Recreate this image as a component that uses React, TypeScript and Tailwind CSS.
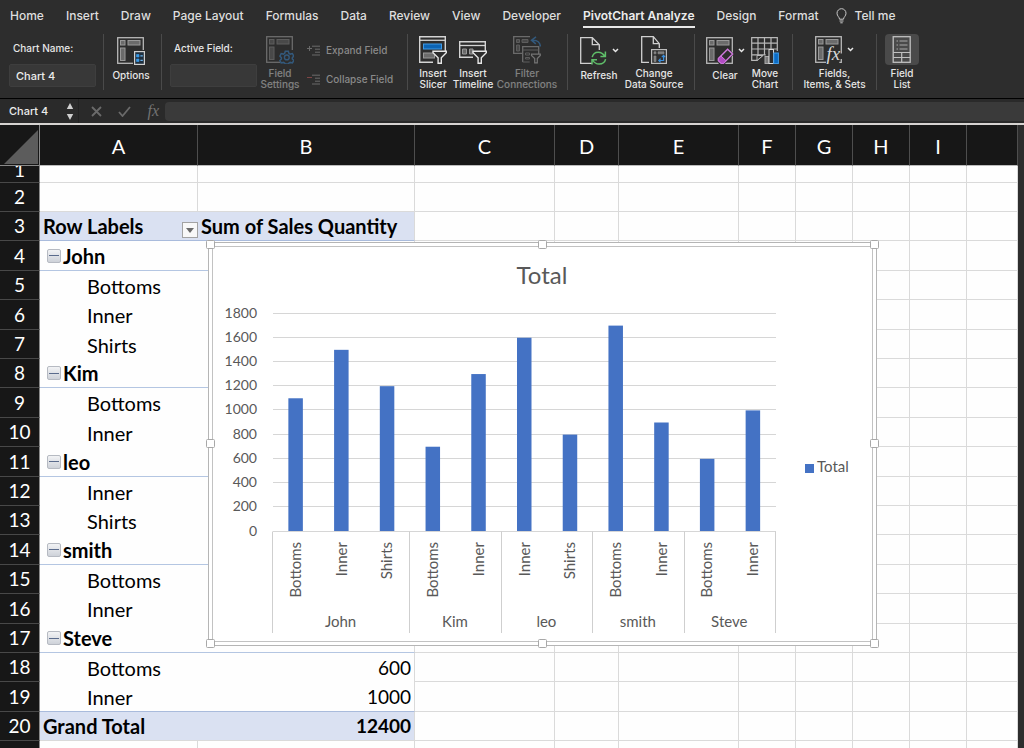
import { useState } from "react";
import type { ReactNode } from "react";

interface PivotRow {
  row: number;
  kind: "blank" | "header" | "group" | "item" | "total";
  label?: string;
  value?: string;
}

interface ChartGroup {
  name: string;
  items: { label: string; value: number }[];
}

const TABS = [
  "Home",
  "Insert",
  "Draw",
  "Page Layout",
  "Formulas",
  "Data",
  "Review",
  "View",
  "Developer",
  "PivotChart Analyze",
  "Design",
  "Format",
];

const COLUMNS = [
  { name: "A", width: "w-[158px]" },
  { name: "B", width: "w-[217px]" },
  { name: "C", width: "w-[140px]" },
  { name: "D", width: "w-[64px]" },
  { name: "E", width: "w-[120px]" },
  { name: "F", width: "w-[57px]" },
  { name: "G", width: "w-[57px]" },
  { name: "H", width: "w-[57px]" },
  { name: "I", width: "w-[57px]" },
  { name: "", width: "w-auto" },
];

const GROUPS: ChartGroup[] = [
  {
    name: "John",
    items: [
      { label: "Bottoms", value: 1100 },
      { label: "Inner", value: 1500 },
      { label: "Shirts", value: 1200 },
    ],
  },
  {
    name: "Kim",
    items: [
      { label: "Bottoms", value: 700 },
      { label: "Inner", value: 1300 },
    ],
  },
  {
    name: "leo",
    items: [
      { label: "Inner", value: 1600 },
      { label: "Shirts", value: 800 },
    ],
  },
  {
    name: "smith",
    items: [
      { label: "Bottoms", value: 1700 },
      { label: "Inner", value: 900 },
    ],
  },
  {
    name: "Steve",
    items: [
      { label: "Bottoms", value: 600 },
      { label: "Inner", value: 1000 },
    ],
  },
];

const buildRows = () => {
  const rows: PivotRow[] = [
    { row: 1, kind: "blank" },
    { row: 2, kind: "blank" },
    { row: 3, kind: "header", label: "Row Labels", value: "Sum of Sales Quantity" },
  ];
  let total = 0;
  GROUPS.forEach((group) => {
    rows.push({ row: rows.length + 1, kind: "group", label: group.name });
    group.items.forEach((item) => {
      total += item.value;
      rows.push({ row: rows.length + 1, kind: "item", label: item.label, value: String(item.value) });
    });
  });
  rows.push({ row: rows.length + 1, kind: "total", label: "Grand Total", value: String(total) });
  rows.push({ row: rows.length + 1, kind: "blank" });
  return rows;
};

const ROWS = buildRows();

const rowHeight = (row: number) => {
  if (row === 1) return "h-[17px]";
  if (row > 3 && (row % 5 === 4 || row % 5 === 1)) return "h-[30px]";
  return "h-[29px]";
};

/* ---------- ribbon icons ---------- */

function PivotIcon({ children }: { children?: ReactNode }) {
  return (
    <svg width="28" height="28" viewBox="0 0 28 28" fill="none">
      <rect x="0.7" y="0.7" width="25.6" height="25.6" stroke="#b8b8b8" strokeWidth="1.3" />
      <rect x="3.5" y="3.5" width="4.5" height="4.5" fill="#6b6b6b" stroke="#999" />
      <rect x="11" y="3.5" width="12" height="4.5" fill="#6b6b6b" stroke="#999" />
      <rect x="3.5" y="11" width="4.5" height="12.5" fill="#6b6b6b" stroke="#999" />
      {children}
    </svg>
  );
}

const optionsIcon = (
  <PivotIcon>
    <rect x="16" y="13" width="12" height="15" fill="#2d2d2d" />
    <rect x="17.6" y="14.6" width="9.8" height="12.8" fill="#20303f" stroke="#d0d0d0" strokeWidth="1.2" />
    <path d="M19.5 17.5h2.5v2.5h-2.5zM19.5 22h2.5v2.5h-2.5z" fill="#3a9be8" stroke="#3a9be8" strokeWidth="0.6" />
    <path d="M23.4 18.8h2.4M23.4 23.3h2.4" stroke="#6cb6f0" strokeWidth="1.2" />
  </PivotIcon>
);

const fieldSettingsIcon = (
  <PivotIcon>
    <rect x="14" y="14" width="14" height="14" fill="#2d2d2d" />
    <path
      d="M19.3 15.2h3l.6 2.1 1.3.8 2.2-.5 1.4 2.5-1.5 1.6v1.2l1.5 1.6-1.4 2.4-2.2-.5-1.3.8-.6 0.7h-3l-.6-0.7-1.3-.8-2.2.5-1.3-2.4 1.5-1.6v-1.2l-1.5-1.6 1.3-2.5 2.2.5 1.3-.8z"
      stroke="#3b8fdd"
      strokeWidth="1.5"
    />
    <circle cx="20.8" cy="21.4" r="2.4" stroke="#3b8fdd" strokeWidth="1.4" />
  </PivotIcon>
);

const slicerIcon = (
  <svg width="28" height="28" viewBox="0 0 28 28" fill="none">
    <path d="M26.3 15V0.7H0.7v25.6H14" stroke="#d4d4d4" strokeWidth="1.4" />
    <path d="M0.7 4.3h25.6" stroke="#d4d4d4" strokeWidth="1.3" />
    <rect x="4.5" y="8" width="18" height="5" fill="#0c64b4" stroke="#3f9ae6" />
    <rect x="4.5" y="17" width="11" height="5" fill="#6b6b6b" stroke="#999" />
    <path d="M14 15.2h13.3v1.6l-5 5v5.5h-3.2v-5.5l-5.1-5z" fill="#2d2d2d" stroke="#e6e6e6" strokeWidth="1.4" />
  </svg>
);

const timelineIcon = (
  <svg width="28" height="28" viewBox="0 0 28 28" fill="none">
    <path d="M26.3 15V5.7H0.7v15.6H14" stroke="#d4d4d4" strokeWidth="1.4" />
    <path d="M0.7 9.5h25.6" stroke="#d4d4d4" strokeWidth="1.3" />
    <path d="M3.5 13h4v5h-4zM10.5 13h3.5v5h-3.5z" fill="#6b6b6b" stroke="#999" />
    <path d="M14 15.2h13.3v1.6l-5 5v5.5h-3.2v-5.5l-5.1-5z" fill="#2d2d2d" stroke="#e6e6e6" strokeWidth="1.4" />
  </svg>
);

const connectionsIcon = (
  <svg width="28" height="28" viewBox="0 0 28 28" fill="none">
    <path d="M17 0.7H0.7v16.6H9" stroke="#b8b8b8" strokeWidth="1.3" />
    <path d="M3.5 3.5h3v3h-3zM9 3.5h6v3H9zM3.5 9h3v6h-3z" fill="#6b6b6b" stroke="#999" />
    <path d="M9.7 26V10.7h16V18" stroke="#b8b8b8" strokeWidth="1.3" />
    <path d="M9.7 14h16M9.7 26h7M12.5 17h4v2h-4zM12.5 21.5h4v1.5h-4z" stroke="#999" />
    <path d="M18.5 18.2h8.8v1.2l-3 3.2v4.2h-2.6v-4.2l-3.2-3.2z" fill="#2d2d2d" stroke="#ccc" strokeWidth="1.2" />
    <path d="M27.3 10.5c0-4-3-6.6-7.8-6.3M23 0.8l-4.5 3.4 4.3 3.7" stroke="#3b8fdd" strokeWidth="1.5" />
  </svg>
);

const refreshIcon = (
  <svg width="28" height="28" viewBox="0 0 28 28" fill="none">
    <path d="M12 26.3H0.7V0.7h11.6l7 7V13M12.3 0.7v7h7" stroke="#d0d0d0" strokeWidth="1.3" />
    <path d="M12.2 20.2c.8-3.4 3.3-5 6-5 3 0 5.2 1.7 6.6 4.2M25.4 14.6v5h-5" stroke="#5fbf6a" strokeWidth="1.5" />
    <path d="M25.6 22.2c-.8 3.4-3.3 4.9-6.4 4.9-3 0-5.2-1.6-6.6-4.1M12 27.6v-4.8h5" stroke="#5fbf6a" strokeWidth="1.5" />
  </svg>
);

const dataSourceIcon = (
  <svg width="28" height="28" viewBox="0 0 28 28" fill="none">
    <path d="M9 26.3H1.7V0.7h11.6l6 7V12M13.3 0.7v7h6" stroke="#d0d0d0" strokeWidth="1.3" />
    <rect x="11.6" y="13.6" width="14.8" height="13.8" fill="#303030" stroke="#bdbdbd" strokeWidth="1.2" />
    <path d="M14 15.8h2v2h-2zM18 15.8h6v2h-6zM14 20h2v5.500h-2z" fill="#7d7d7d" stroke="#8f8f8f" strokeWidth="0.6" />
    <path d="M23.6 19.5v5h-4.6M20.6 22.6l-1.8 1.9 1.8 1.8M21.8 21.2l1.8-1.8 1.6 1.8" stroke="#3b8fdd" strokeWidth="1.2" />
  </svg>
);

const clearIcon = (
  <PivotIcon>
    <path d="M11 20.5 21 10.5l7 6.5L18 28h-5z" fill="#2d2d2d" />
    <path d="M12.4 21.6 21.6 12.2l5 4.7-9.2 9.5h-2.2l-2.8-2.7z" fill="#2d2d2d" stroke="#d07ade" strokeWidth="1.4" />
    <path d="m12.4 21.6 2.6-2.6 5 4.7-2.6 2.7h-2.2l-2.8-2.7z" fill="#b24cc4" stroke="#d07ade" />
  </PivotIcon>
);

const moveChartIcon = (
  <svg width="28" height="28" viewBox="0 0 28 28" fill="none">
    <path d="M26.3 15V1.7H0.7v22.6H6l5-4.6M0.7 7.2h25.6M0.7 13h25.6M0.7 18.8h14M7 1.7v20M13.5 1.7v17M20 1.7v12" stroke="#b8b8b8" strokeWidth="1.2" />
    <path d="M6 24.5v-5h6z" fill="#2d2d2d" stroke="#b8b8b8" />
    <rect x="14" y="20.5" width="4" height="7" fill="#7a7a7a" stroke="#aaa" />
    <rect x="18" y="13.5" width="4.5" height="14" fill="#2d2d2d" stroke="#d8d8d8" />
    <rect x="22.8" y="17" width="4.6" height="10.5" fill="#0c6cc4" stroke="#3f9ae6" />
  </svg>
);

const fieldsIcon = (
  <PivotIcon>
    <path d="M11 12h17v16H11z" fill="#2d2d2d" />
    <path d="M26.3 12v5.5M26.3 23v3.3h-2" stroke="#b8b8b8" strokeWidth="1.3" />
    <text x="11.5" y="24" fill="#d8d8d8" fontSize="19" fontStyle="italic" fontFamily="Liberation Serif, serif">
      fx
    </text>
  </PivotIcon>
);

const fieldListIcon = (
  <svg width="28" height="28" viewBox="0 0 28 28" fill="none">
    <rect x="5.2" y="0.7" width="17" height="25.6" stroke="#c0c0c0" strokeWidth="1.3" />
    <path d="M8.5 5h1.5M11.5 5h8M8.5 9h1.5M11.5 9h8M8.5 13h1.5M11.5 13h8" stroke="#a8a8a8" strokeWidth="1.2" />
    <path d="M5.2 16.5h17M5.2 21.5h17M13.7 16.5v9.8" stroke="#c0c0c0" strokeWidth="1.2" />
  </svg>
);

function Chevron() {
  return (
    <svg width="7" height="5" viewBox="0 0 7 5" fill="none">
      <path d="M1 1l2.5 2.5L6 1" stroke="#e8e8e8" strokeWidth="1.5" />
    </svg>
  );
}

/* ---------- ribbon ---------- */

interface RibbonButtonProps {
  icon: ReactNode;
  lines: string[];
  width: string;
  menu?: boolean;
  disabled?: boolean;
  active?: boolean;
}

function RibbonButton({ icon, lines, width, menu, disabled, active }: RibbonButtonProps) {
  return (
    <button
      type="button"
      disabled={disabled}
      className={`flex shrink-0 flex-col items-center text-[10px] leading-[11px] font-medium text-[#e6e6e6] disabled:opacity-45 ${width}`}
    >
      <span
        className={`flex h-[33px] items-center justify-center gap-1 rounded-sm px-[3px] ${active ? "bg-[#4a4a4a]" : ""}`}
      >
        {icon}
        {menu && <Chevron />}
      </span>
      <span className="mt-[3px] whitespace-nowrap">
        {lines.map((line) => (
          <span key={line} className="block">
            {line}
          </span>
        ))}
      </span>
    </button>
  );
}

function FieldCommand({ label, sign }: { label: string; sign: string }) {
  return (
    <button
      type="button"
      disabled
      className="flex items-center gap-[5px] text-[10px] leading-[12px] font-medium whitespace-nowrap text-[#8a8a8a]"
    >
      <svg width="14" height="11" viewBox="0 0 14 11" fill="none">
        <path d="M5 1.2h8M8 4.2h5M8 7.2h5M5 10h8" stroke="#6b6b6b" />
        <path
          d={sign === "+" ? "M0 3.5h5M2.5 1v5" : "M0 3.5h5"}
          stroke={sign === "+" ? "#6b6b6b" : "#7d4545"}
        />
      </svg>
      {label}
    </button>
  );
}

function Ribbon({ chartName, onRename }: { chartName: string; onRename: (name: string) => void }) {
  const [activeTab, setActiveTab] = useState("PivotChart Analyze");

  return (
    <header className="shrink-0 border-b border-black bg-[#2d2d2d]">
      <nav className="flex h-8 items-center gap-[22px] px-[10px] text-xs font-medium whitespace-nowrap text-[#dedede]">
        {TABS.map((tab) => (
          <button
            key={tab}
            type="button"
            onClick={() => setActiveTab(tab)}
            className={
              tab === activeTab
                ? "mt-1 border-b-2 border-[#e8e8e8] pb-[2px] font-semibold text-[#ececec]"
                : ""
            }
          >
            {tab}
          </button>
        ))}
        <button type="button" className="-ml-[5px] flex items-center gap-2">
          <svg width="11" height="16" viewBox="0 0 11 16" fill="none" stroke="#c8c8c8">
            <path d="M3.5 11.2C3.5 9 1 8.2 1 5.2a4.5 4.5 0 0 1 9 0c0 3-2.5 3.8-2.5 6zM3.5 13h4M4.3 14.8h2.4" />
          </svg>
          Tell me
        </button>
      </nav>

      <div className="flex h-[66px] items-start pt-[2px]">
        <div className="flex h-14 w-[104px] shrink-0 flex-col border-r border-[#4a4a4a] pt-2 pl-[9px]">
          <label htmlFor="chart-name" className="pl-1 text-[10px] leading-[12px] font-medium text-[#e6e6e6]">
            Chart Name:
          </label>
          <input
            id="chart-name"
            value={chartName}
            onChange={(e) => onRename(e.target.value)}
            className="mt-[10px] h-[23px] w-[87px] rounded-xs border border-[#3e3e3e] bg-[#383838] px-[6px] text-[11px] font-medium text-[#ececec]"
          />
        </div>

        <div className="flex h-14 w-[58px] shrink-0 border-r border-[#4a4a4a] pl-[3px]">
          <RibbonButton icon={optionsIcon} lines={["Options"]} width="w-12" />
        </div>

        <div className="flex h-14 w-[246px] shrink-0 border-r border-[#4a4a4a] pl-2">
          <div className="flex flex-col pt-2">
            <label htmlFor="active-field" className="pl-1 text-[10px] leading-[12px] font-medium text-[#e6e6e6]">
              Active Field:
            </label>
            <input
              id="active-field"
              className="mt-[10px] h-[23px] w-[87px] rounded-xs border border-[#3e3e3e] bg-[#383838] px-[6px] text-[11px] text-[#ececec]"
            />
          </div>
          <RibbonButton icon={fieldSettingsIcon} lines={["Field", "Settings"]} width="w-[46px]" disabled />
          <div className="flex flex-col gap-[17px] pt-[10px] pl-1">
            <FieldCommand label="Expand Field" sign="+" />
            <FieldCommand label="Collapse Field" sign="-" />
          </div>
        </div>

        <div className="flex h-14 w-[160px] shrink-0 border-r border-[#4a4a4a] pl-[5px]">
          <RibbonButton icon={slicerIcon} lines={["Insert", "Slicer"]} width="w-10" />
          <RibbonButton icon={timelineIcon} lines={["Insert", "Timeline"]} width="w-10" />
          <RibbonButton icon={connectionsIcon} lines={["Filter", "Connections"]} width="w-[68px]" disabled />
        </div>

        <div className="flex h-14 w-[127px] shrink-0 border-r border-[#4a4a4a] pl-[7px]">
          <RibbonButton icon={refreshIcon} lines={["Refresh"]} width="w-12" menu />
          <RibbonButton icon={dataSourceIcon} lines={["Change", "Data Source"]} width="w-[62px]" />
        </div>

        <div className="flex h-14 w-[98px] shrink-0 border-r border-[#4a4a4a] pl-[6px]">
          <RibbonButton icon={clearIcon} lines={["Clear"]} width="w-12" menu />
          <RibbonButton icon={moveChartIcon} lines={["Move", "Chart"]} width="w-8" />
        </div>

        <div className="flex h-14 w-[84px] shrink-0 justify-center border-r border-[#4a4a4a]">
          <RibbonButton icon={fieldsIcon} lines={["Fields,", "Items, & Sets"]} width="w-[68px]" menu />
        </div>

        <div className="flex h-14 shrink-0 pl-[5px]">
          <RibbonButton icon={fieldListIcon} lines={["Field", "List"]} width="w-10" active />
        </div>
      </div>
    </header>
  );
}

function FormulaBar({ chartName }: { chartName: string }) {
  return (
    <div className="flex h-[26px] shrink-0 items-center border-b-2 border-[#d6d3d1] bg-[#2a2a2a]">
      <input
        aria-label="Name box"
        value={chartName}
        readOnly
        className="h-full w-[66px] bg-transparent pl-[9px] text-[11px] font-medium text-[#ececec]"
      />
      <button type="button" aria-label="Name list" className="flex h-full w-[13px] items-center border-r border-[#222]">
        <svg width="8" height="17" viewBox="0 0 8 17" fill="#cfcfcf">
          <path d="M4 0l3.2 6H.8zM4 17l3.2-6H.8z" />
        </svg>
      </button>
      <div className="flex w-[86px] items-center justify-between pr-[6px] pl-3">
        <button type="button" aria-label="Cancel" disabled>
          <svg width="11" height="11" viewBox="0 0 11 11" stroke="#6a6a6a" strokeWidth="1.8">
            <path d="M1 1l9 9M10 1l-9 9" />
          </svg>
        </button>
        <button type="button" aria-label="Enter" disabled>
          <svg width="13" height="11" viewBox="0 0 13 11" fill="none" stroke="#6a6a6a" strokeWidth="1.8">
            <path d="M1 6l3.5 4L12 1" />
          </svg>
        </button>
        <button type="button" className="font-['Liberation_Serif',serif] text-base leading-4 text-[#737373] italic" disabled>
          fx
        </button>
      </div>
      <input aria-label="Formula" className="h-[19px] min-w-0 flex-1 rounded-l-sm bg-[#3a3a3a] px-2 text-xs text-white" />
    </div>
  );
}

/* ---------- sheet ---------- */

const cellBorder = (kind: PivotRow["kind"], nextKind?: PivotRow["kind"]) => {
  if (kind === "header" || nextKind === "total") return "border-b border-[#a9bbdc]";
  if (kind === "group") return "border-b border-[#b4c6e2]";
  if (kind === "item") return "";
  return "border-b border-[#dadada]";
};

function SheetRow({ data, nextKind }: { data: PivotRow; nextKind?: PivotRow["kind"] }) {
  const { row, kind, label, value } = data;
  const bold = kind === "item" || kind === "blank" ? "" : "font-bold";
  const shaded = kind === "header" || kind === "total" ? "bg-[#dae1f2]" : "";
  const border = cellBorder(kind, nextKind);

  return (
    <tr className={rowHeight(row)}>
      <th scope="row" className="border-r border-b border-r-[#8a8a8a] border-b-[#484848] bg-[#171717] p-0 text-[19px] font-normal text-white">
        {/* row 1 is scrolled half under the column headers */}
        <div className={row === 1 ? "flex h-4 items-end justify-center overflow-hidden leading-6" : "leading-6"}>
          {row > 20 ? "" : row}
        </div>
      </th>
      <td className={`${border} ${bold} ${shaded} p-0 ${kind === "blank" ? "border-r border-r-[#dadada]" : ""}`}>
        {kind === "header" && (
          <div className="flex items-end justify-between pl-[3px]">
            {label}
            <button
              type="button"
              aria-label="Filter row labels"
              className="flex size-4 items-center justify-center border border-[#a3a3a3] bg-[#f8f8f8]"
            >
              <svg width="8" height="5" viewBox="0 0 8 5" fill="#6a6a6a">
                <path d="M0 0h8L4 5z" />
              </svg>
            </button>
          </div>
        )}
        {kind === "group" && (
          <div className="flex items-center gap-[2px] pl-[7px]">
            <button
              type="button"
              aria-label={`Collapse ${label}`}
              className="flex size-[14px] items-center justify-center rounded-xs border border-[#b6bac2] bg-linear-to-b from-[#f2f3f5] to-[#ced2d9]"
            >
              <span className="h-px w-[10px] bg-[#5a6b8c]" />
            </button>
            {label}
          </div>
        )}
        {kind === "item" && <div className="pl-[47px]">{label}</div>}
        {kind === "total" && <div className="pl-[3px]">{label}</div>}
      </td>
      <td
        className={`${border} ${bold} ${shaded} border-r border-r-[#dadada] px-[3px] py-0 ${
          kind === "header" ? "text-left" : "text-right text-[19px]"
        }`}
      >
        {value}
      </td>
      {COLUMNS.slice(2).map((col) => (
        <td key={col.name} className="border-r border-b border-[#dadada] p-0" />
      ))}
    </tr>
  );
}

const PLOT_LEFT = 65;
const PLOT_RIGHT = 568;
const PLOT_BOTTOM = 289.5;
const SLOT = (PLOT_RIGHT - PLOT_LEFT) / 11;
const TICKS = [0, 200, 400, 600, 800, 1000, 1200, 1400, 1600, 1800];

const yOf = (value: number) => PLOT_BOTTOM - (value * 218) / 1800;

function PivotChart() {
  let slot = 0;
  const groups = GROUPS.map((group) => {
    const start = slot;
    slot += group.items.length;
    return { ...group, start, end: slot };
  });

  return (
    <svg
      width="669"
      height="404"
      viewBox="0 0 669 404"
      className="block overflow-visible font-[Lato,sans-serif]"
      fill="#595959"
      fontSize="15"
      role="img"
      aria-label="Total"
    >
      <rect x="0.5" y="0.5" width="668" height="403" fill="#fff" stroke="#b5b5b5" />
      <rect x="4.5" y="4.5" width="660" height="395" fill="#fff" stroke="#c2c2c2" />
      <text x="334" y="42" fontSize="24" textAnchor="middle">
        Total
      </text>

      {TICKS.map((tick) => (
        <g key={tick}>
          <line x1={PLOT_LEFT} x2={PLOT_RIGHT} y1={Math.round(yOf(tick)) - 0.5} y2={Math.round(yOf(tick)) - 0.5} stroke="#d6d6d6" />
          <text x="49" y={yOf(tick) + 4} fontSize="14" textAnchor="end">
            {tick}
          </text>
        </g>
      ))}

      {groups.map((group) => (
        <g key={group.name}>
          <line
            x1={Math.round(PLOT_LEFT + group.start * SLOT) - 0.5}
            x2={Math.round(PLOT_LEFT + group.start * SLOT) - 0.5}
            y1={PLOT_BOTTOM}
            y2="391"
            stroke="#cfcfcf"
          />
          {group.items.map((item, i) => {
            const center = PLOT_LEFT + (group.start + i + 0.5) * SLOT;
            return (
              <g key={item.label}>
                <rect x={center - 7.5} y={yOf(item.value)} width="14.5" height={PLOT_BOTTOM - yOf(item.value) - 0.5} fill="#4472c4" />
                <text transform={`translate(${center + 5} 300) rotate(-90)`} textAnchor="end">
                  {item.label}
                </text>
              </g>
            );
          })}
          <text x={PLOT_LEFT + ((group.start + group.end) / 2) * SLOT - 1} y="385" textAnchor="middle">
            {group.name}
          </text>
        </g>
      ))}
      <line x1="567.5" x2="567.5" y1={PLOT_BOTTOM} y2="391" stroke="#cfcfcf" />

      <rect x="597" y="222" width="9" height="9" fill="#4472c4" />
      <text x="609" y="230">
        Total
      </text>

      {[2.5, 334.5, 666.5].map((x) =>
        [2.5, 201.5, 401.5].map((y) =>
          x === 334.5 && y === 201.5 ? null : (
            <rect key={`${x}-${y}`} x={x - 4} y={y - 4} width="8" height="8" rx="1" fill="#fff" stroke="#a8a8a8" />
          )
        )
      )}
    </svg>
  );
}

export default function App() {
  const [chartName, setChartName] = useState("Chart 4");

  return (
    <div className="flex h-screen flex-col overflow-hidden bg-[#2d2d2d] font-[Inter,sans-serif]">
      <Ribbon chartName={chartName} onRename={setChartName} />
      <FormulaBar chartName={chartName} />

      <main className="relative min-h-0 flex-1 overflow-hidden pr-[6px]">
        <table className="w-full table-fixed border-separate border-spacing-0 bg-[#fefefe] font-[Lato,sans-serif] text-xl leading-6 text-black">
          <thead>
            <tr className="h-[41px] bg-[#171717] text-white">
              <th className="w-10 border-r border-b border-[#8a8a8a] p-0">
                <svg width="34" height="34" viewBox="0 0 34 34" className="mt-1 ml-1">
                  <path d="M34 0v34H0z" fill="#5c5c5c" />
                </svg>
              </th>
              {COLUMNS.map((col) => (
                <th
                  key={col.name}
                  scope="col"
                  className={`${col.width} border-r border-b border-r-[#4e4e4e] border-b-[#bdbdbd] px-0 pt-[2px] pb-0 font-normal`}
                >
                  {col.name}
                </th>
              ))}
            </tr>
          </thead>
          <tbody>
            {ROWS.map((data, i) => (
              <SheetRow key={data.row} data={data} nextKind={ROWS[i + 1]?.kind} />
            ))}
          </tbody>
        </table>

        <div className="absolute top-[117px] left-[208px]">
          <PivotChart />
        </div>
      </main>
    </div>
  );
}
